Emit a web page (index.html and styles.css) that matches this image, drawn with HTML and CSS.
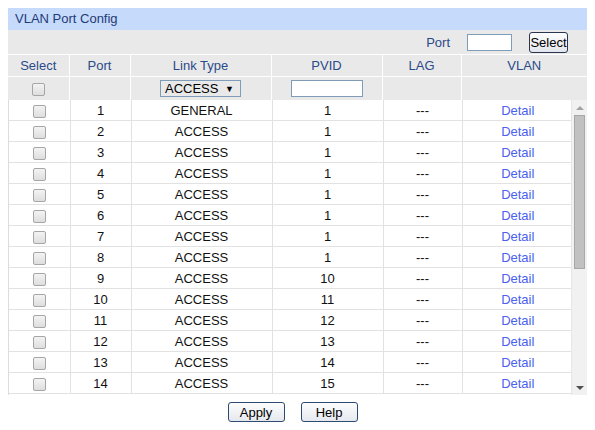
FILE: index.html
```html
<!DOCTYPE html>
<html>
<head>
<meta charset="utf-8">
<link rel="stylesheet" href="styles.css">
</head>
<body>
<div class="panel">
  <div class="title">VLAN Port Config</div>
  <div class="portbar">
    <span class="portlabel">Port</span>
    <input class="portinput" type="text">
    <button class="selbtn">Select</button>
  </div>
  <table class="head">
    <colgroup><col class="c1"><col class="c2"><col class="c3"><col class="c4"><col class="c5"><col class="c6h"></colgroup>
    <tr class="hrow"><th>Select</th><th>Port</th><th>Link Type</th><th>PVID</th><th>LAG</th><th>VLAN</th></tr>
    <tr class="frow">
      <td><span class="cb"></span></td>
      <td></td>
      <td><span class="dd"><span>ACCESS</span><span class="arr">▼</span></span></td>
      <td><input class="pvid" type="text"></td>
      <td></td>
      <td></td>
    </tr>
  </table>
  <div class="scroll">
    <div class="rows">
      <table class="body">
        <colgroup><col class="c1"><col class="c2"><col class="c3"><col class="c4"><col class="c5"><col class="c6"></colgroup>
        <tr><td><span class="cb"></span></td><td>1</td><td>GENERAL</td><td>1</td><td>---</td><td><a>Detail</a></td></tr>
        <tr><td><span class="cb"></span></td><td>2</td><td>ACCESS</td><td>1</td><td>---</td><td><a>Detail</a></td></tr>
        <tr><td><span class="cb"></span></td><td>3</td><td>ACCESS</td><td>1</td><td>---</td><td><a>Detail</a></td></tr>
        <tr><td><span class="cb"></span></td><td>4</td><td>ACCESS</td><td>1</td><td>---</td><td><a>Detail</a></td></tr>
        <tr><td><span class="cb"></span></td><td>5</td><td>ACCESS</td><td>1</td><td>---</td><td><a>Detail</a></td></tr>
        <tr><td><span class="cb"></span></td><td>6</td><td>ACCESS</td><td>1</td><td>---</td><td><a>Detail</a></td></tr>
        <tr><td><span class="cb"></span></td><td>7</td><td>ACCESS</td><td>1</td><td>---</td><td><a>Detail</a></td></tr>
        <tr><td><span class="cb"></span></td><td>8</td><td>ACCESS</td><td>1</td><td>---</td><td><a>Detail</a></td></tr>
        <tr><td><span class="cb"></span></td><td>9</td><td>ACCESS</td><td>10</td><td>---</td><td><a>Detail</a></td></tr>
        <tr><td><span class="cb"></span></td><td>10</td><td>ACCESS</td><td>11</td><td>---</td><td><a>Detail</a></td></tr>
        <tr><td><span class="cb"></span></td><td>11</td><td>ACCESS</td><td>12</td><td>---</td><td><a>Detail</a></td></tr>
        <tr><td><span class="cb"></span></td><td>12</td><td>ACCESS</td><td>13</td><td>---</td><td><a>Detail</a></td></tr>
        <tr><td><span class="cb"></span></td><td>13</td><td>ACCESS</td><td>14</td><td>---</td><td><a>Detail</a></td></tr>
        <tr><td><span class="cb"></span></td><td>14</td><td>ACCESS</td><td>15</td><td>---</td><td><a>Detail</a></td></tr>
      </table>
    </div>
    <div class="sbar">
      <div class="sbtn"><span class="tri-up"></span></div>
      <div class="track"><div class="thumb"></div></div>
      <div class="sbtn"><span class="tri-down"></span></div>
    </div>
  </div>
  <div class="actions">
    <button class="btn">Apply</button>
    <button class="btn">Help</button>
  </div>
</div>
</body>
</html>
```
FILE: styles.css
```css
html, body {
  margin: 0;
  padding: 0;
  background: #ffffff;
}
body {
  padding: 8px;
  font-family: "Liberation Sans", Arial, sans-serif;
  font-size: 13px;
  color: #111;
}
.panel {
  width: 579px;
}
.title {
  height: 22px;
  line-height: 21px;
  background: #c6dafc;
  color: #1e3a78;
  padding-left: 7px;
  font-size: 13px;
}
.portbar {
  height: 24px;
  background: #e9e9e9;
  display: flex;
  align-items: center;
  justify-content: flex-end;
  padding-right: 19px;
  border-bottom: 1px solid #ffffff;
}
.portlabel {
  color: #2b4a8a;
  margin-right: 17px;
}
.portinput {
  width: 45px;
  height: 17px;
  box-sizing: border-box;
  border: 1px solid #7f9db9;
  padding: 0;
  margin: 0 17px 0 0;
  background: #fff;
}
.selbtn {
  width: 39px;
  height: 21px;
  box-sizing: border-box;
  padding: 0;
  margin: 0;
  border: 1px solid #2a3550;
  border-radius: 3px;
  background: linear-gradient(#fdfdfd, #e3e6ec);
  font-family: "Liberation Sans", Arial, sans-serif;
  font-size: 13px;
  color: #000;
}
table {
  border-collapse: collapse;
  table-layout: fixed;
}
.head {
  width: 579px;
}
.c1 { width: 61px; }
.c2 { width: 61px; }
.c3 { width: 141px; }
.c4 { width: 111px; }
.c5 { width: 79px; }
.c6h { width: 126px; }
.c6 { width: 111px; }
.head th, .head td {
  background: #e9e9e9;
  border-left: 1px solid #ffffff;
  border-bottom: 1px solid #ffffff;
  padding: 0;
  text-align: center;
  font-weight: normal;
}
.head th:first-child, .head td:first-child {
  border-left: none;
}
.hrow th {
  height: 21px;
  color: #2b4a8a;
}
.frow td {
  height: 23px;
  border-bottom: none;
}
.cb {
  display: inline-block;
  width: 11px;
  height: 11px;
  border: 1px solid #a6a6a6;
  border-radius: 2px;
  background: linear-gradient(#f3f3f3, #dedede);
  vertical-align: middle;
}
.dd {
  display: inline-flex;
  align-items: center;
  justify-content: space-between;
  box-sizing: border-box;
  width: 81px;
  height: 17px;
  border: 1px solid #7f9db9;
  padding: 0 6px 0 4px;
  vertical-align: middle;
  color: #000;
}
.arr {
  font-size: 9px;
}
.pvid {
  width: 72px;
  height: 17px;
  box-sizing: border-box;
  border: 1px solid #7f9db9;
  padding: 0;
  margin: 0;
  background: #fff;
  vertical-align: middle;
}
.scroll {
  display: flex;
  width: 579px;
  height: 295px;
  box-sizing: border-box;
  border-left: 1px solid #dcdcdc;
}
.rows {
  width: 563px;
  overflow: hidden;
}
.body {
  width: 563px;
}
.body td {
  height: 20px;
  padding: 0;
  text-align: center;
  border-left: 1px solid #e2e2e2;
  border-bottom: 1px solid #e2e2e2;
  color: #111;
}
.body td:first-child {
  border-left: none;
}
.body a {
  color: #4b5ff0;
  text-decoration: none;
}
.sbar {
  width: 15px;
  background: #f1f1f1;
  display: flex;
  flex-direction: column;
  border-left: 1px solid #e6e6e6;
}
.sbtn {
  height: 15px;
  display: flex;
  align-items: center;
  justify-content: center;
}
.tri-up {
  width: 0;
  height: 0;
  border-left: 4px solid transparent;
  border-right: 4px solid transparent;
  border-bottom: 4px solid #a3a3a3;
}
.tri-down {
  width: 0;
  height: 0;
  border-left: 4px solid transparent;
  border-right: 4px solid transparent;
  border-top: 4px solid #505050;
}
.track {
  flex: 1;
  display: flex;
  justify-content: center;
}
.thumb {
  width: 9px;
  height: 152px;
  background: #c1c1c1;
  border: 1px solid #a8a8a8;
}
.actions {
  display: flex;
  justify-content: center;
  gap: 16px;
  padding: 7px 10px 0 0;
}
.btn {
  width: 57px;
  height: 20px;
  box-sizing: border-box;
  padding: 0;
  border: 1px solid #2d4a72;
  border-radius: 3px;
  background: linear-gradient(#fdfdfd, #e5e8ee);
  font-family: "Liberation Sans", Arial, sans-serif;
  font-size: 13px;
  color: #000;
}
```
